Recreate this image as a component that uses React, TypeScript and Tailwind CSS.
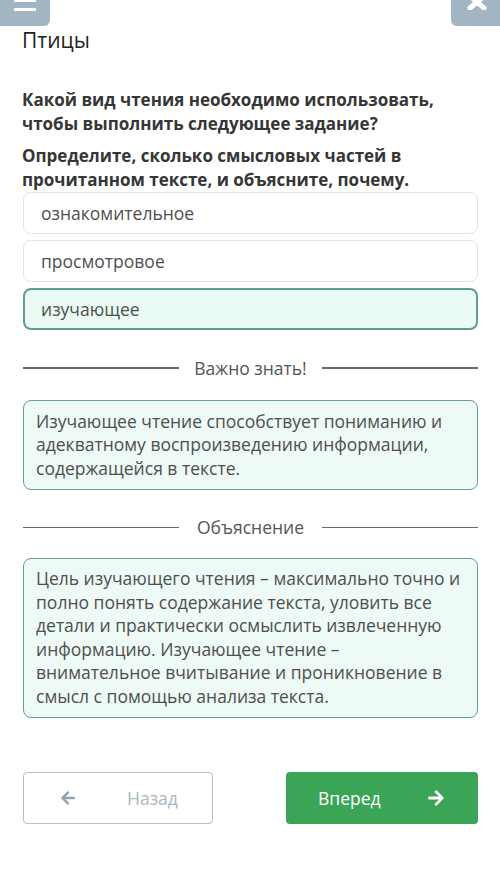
import { FaArrowLeft, FaArrowRight } from "react-icons/fa";

const OPTIONS = ["ознакомительное", "просмотровое", "изучающее"];

function Divider({ label }: { label: string }) {
  return (
    <div className="flex items-center h-6">
      <div className="flex-1 h-[1.5px] bg-[#6b6b6b]" />
      <div className="w-[143px] text-center text-[17.5px] text-[#555]">{label}</div>
      <div className="flex-1 h-[1.5px] bg-[#6b6b6b]" />
    </div>
  );
}

export default function App() {
  return (
    <div className="w-[500px] h-[886px] bg-white overflow-hidden font-['Open_Sans',sans-serif]">
      {/* top bar */}
      <div className="flex justify-between h-[26px]">
        <div className="w-[50px] h-[26px] bg-[#a2b5c2] rounded-br-md relative">
          <div className="absolute left-[14px] top-0 w-[22px] h-[2px] bg-white" />
          <div className="absolute left-[14px] top-[8px] w-[22px] h-[3px] bg-white" />
        </div>
        <div className="w-[49px] h-[26px] bg-[#a2b5c2] rounded-bl-md flex justify-center">
          <svg width="22" height="14" viewBox="0 0 22 14" className="-mt-[4px] ml-[2px]">
            <path d="M4 0 L18 12 M18 0 L4 12" stroke="white" strokeWidth="5" strokeLinecap="round" />
          </svg>
        </div>
      </div>

      <div className="px-[22px]">
        <div className="text-[21px] leading-[28px] text-[#222]">Птицы</div>

        <div className="mt-[34px] text-[17px] leading-6 font-bold text-[#363636]">
          Какой вид чтения необходимо использовать, чтобы выполнить следующее задание?
        </div>
        <div className="mt-2 text-[17px] leading-6 font-bold text-[#363636]">
          Определите, сколько смысловых частей в прочитанном тексте, и объясните, почему.
        </div>

        <div className="pl-px flex flex-col gap-[6px]">
          {OPTIONS.map((o, i) => (
            <div
              key={o}
              className={
                i === 2
                  ? "h-[42px] flex items-center pl-[16px] rounded-lg border-2 border-[#5f9e8c] bg-[#eafbf3] text-[17.5px] text-[#4f4f4f]"
                  : "h-[42px] flex items-center pl-[17px] rounded-lg border border-[#e3e3e3] bg-white text-[17.5px] text-[#4f4f4f]"
              }
            >
              {o}
            </div>
          ))}
        </div>

        <div className="mt-[26px] pl-px">
          <Divider label="Важно знать!" />
        </div>

        <div className="mt-[20px] ml-px rounded-lg border-[1.5px] border-[#62a292] bg-[#eefaf5] px-[12px] py-[8.5px] text-[17.5px] leading-[23.5px] text-[#4f4f4f]">
          Изучающее чтение способствует пониманию и адекватному воспроизведению информации, содержащейся в тексте.
        </div>

        <div className="mt-[26px] pl-px">
          <Divider label="Объяснение" />
        </div>

        <div className="mt-[18px] ml-px rounded-lg border-[1.5px] border-[#62a292] bg-[#eefaf5] px-[12px] py-[8.5px] text-[17.5px] leading-[23.6px] text-[#4f4f4f]">
          Цель изучающего чтения – максимально точно и полно понять содержание текста, уловить все детали и практически осмыслить извлеченную информацию. Изучающее чтение – внимательное вчитывание и проникновение в смысл с помощью анализа текста.
        </div>

        <div className="mt-[54px] pl-px flex justify-between">
          <button className="w-[190px] h-[52px] rounded border-[1.5px] border-[#b5c1c9] bg-white flex items-center text-[17.5px] text-[#a9b8c3]">
            <FaArrowLeft size={16} className="ml-[36px] text-[#8fa3b1]" />
            <span className="ml-[51px]">Назад</span>
          </button>
          <button className="w-[192px] h-[52px] rounded bg-[#3aa556] flex items-center text-[17.5px] text-white">
            <span className="ml-[32px]">Вперед</span>
            <FaArrowRight size={18} className="ml-[46px]" />
          </button>
        </div>
      </div>
    </div>
  );
}
